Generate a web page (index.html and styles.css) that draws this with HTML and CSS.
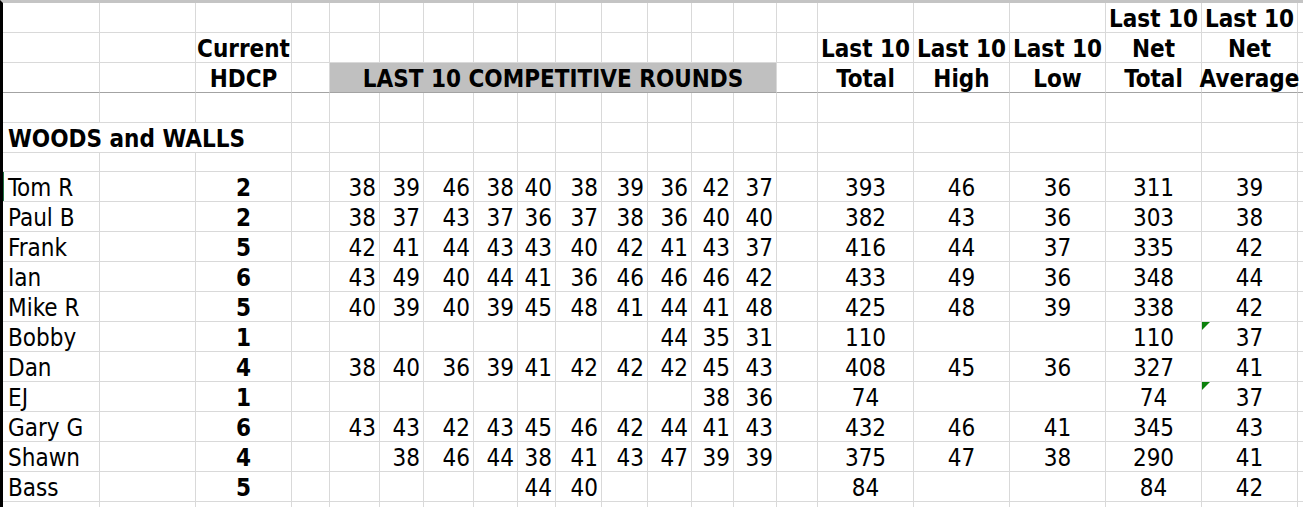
FILE: index.html
```html
<!DOCTYPE html>
<html>
<head>
<meta charset="utf-8">
<link rel="stylesheet" href="styles.css">
</head>
<body>
<div class="sheet">
  <div class="row">
    <div class="c"></div><div class="c"></div><div class="c"></div><div class="c"></div><div class="c"></div><div class="c"></div><div class="c"></div><div class="c"></div><div class="c"></div><div class="c"></div><div class="c"></div><div class="c"></div><div class="c"></div><div class="c"></div><div class="c"></div>
    <div class="c"></div><div class="c"></div><div class="c"></div><div class="c h">Last 10</div><div class="c h">Last 10</div><div class="c"></div>
  </div>
  <div class="row">
    <div class="c"></div><div class="c"></div><div class="c h">Current</div><div class="c"></div><div class="c"></div><div class="c"></div><div class="c"></div><div class="c"></div><div class="c"></div><div class="c"></div><div class="c"></div><div class="c"></div><div class="c"></div><div class="c"></div><div class="c"></div>
    <div class="c h">Last 10</div><div class="c h">Last 10</div><div class="c h">Last 10</div><div class="c h">Net</div><div class="c h">Net</div><div class="c"></div>
  </div>
  <div class="row head-end">
    <div class="c"></div><div class="c"></div><div class="c h">HDCP</div><div class="c"></div>
    <div class="c h band">LAST 10 COMPETITIVE ROUNDS</div>
    <div class="c"></div>
    <div class="c h">Total</div><div class="c h">High</div><div class="c h">Low</div><div class="c h">Total</div><div class="c h">Average</div><div class="c"></div>
  </div>
  <div class="row">
    <div class="c"></div><div class="c"></div><div class="c"></div><div class="c"></div><div class="c"></div><div class="c"></div><div class="c"></div><div class="c"></div><div class="c"></div><div class="c"></div><div class="c"></div><div class="c"></div><div class="c"></div><div class="c"></div><div class="c"></div>
    <div class="c"></div><div class="c"></div><div class="c"></div><div class="c"></div><div class="c"></div><div class="c"></div>
  </div>
  <div class="row">
    <div class="c group">WOODS and WALLS</div><div class="c"></div><div class="c"></div><div class="c"></div><div class="c"></div><div class="c"></div><div class="c"></div><div class="c"></div><div class="c"></div><div class="c"></div><div class="c"></div><div class="c"></div><div class="c"></div>
    <div class="c"></div><div class="c"></div><div class="c"></div><div class="c"></div><div class="c"></div><div class="c"></div>
  </div>
  <div class="row short">
    <div class="c"></div><div class="c"></div><div class="c"></div><div class="c"></div><div class="c"></div><div class="c"></div><div class="c"></div><div class="c"></div><div class="c"></div><div class="c"></div><div class="c"></div><div class="c"></div><div class="c"></div><div class="c"></div><div class="c"></div>
    <div class="c"></div><div class="c"></div><div class="c"></div><div class="c"></div><div class="c"></div><div class="c"></div>
  </div>

  <div class="row">
    <div class="c name sel">Tom R</div><div class="c"></div><div class="c hd">2</div><div class="c"></div>
    <div class="c n">38</div><div class="c n">39</div><div class="c n">46</div><div class="c n">38</div><div class="c n">40</div><div class="c n">38</div><div class="c n">39</div><div class="c n">36</div><div class="c n">42</div><div class="c n">37</div>
    <div class="c"></div><div class="c t">393</div><div class="c t">46</div><div class="c t">36</div><div class="c t">311</div><div class="c t">39</div><div class="c"></div>
  </div>
  <div class="row">
    <div class="c name">Paul B</div><div class="c"></div><div class="c hd">2</div><div class="c"></div>
    <div class="c n">38</div><div class="c n">37</div><div class="c n">43</div><div class="c n">37</div><div class="c n">36</div><div class="c n">37</div><div class="c n">38</div><div class="c n">36</div><div class="c n">40</div><div class="c n">40</div>
    <div class="c"></div><div class="c t">382</div><div class="c t">43</div><div class="c t">36</div><div class="c t">303</div><div class="c t">38</div><div class="c"></div>
  </div>
  <div class="row">
    <div class="c name">Frank</div><div class="c"></div><div class="c hd">5</div><div class="c"></div>
    <div class="c n">42</div><div class="c n">41</div><div class="c n">44</div><div class="c n">43</div><div class="c n">43</div><div class="c n">40</div><div class="c n">42</div><div class="c n">41</div><div class="c n">43</div><div class="c n">37</div>
    <div class="c"></div><div class="c t">416</div><div class="c t">44</div><div class="c t">37</div><div class="c t">335</div><div class="c t">42</div><div class="c"></div>
  </div>
  <div class="row">
    <div class="c name">Ian</div><div class="c"></div><div class="c hd">6</div><div class="c"></div>
    <div class="c n">43</div><div class="c n">49</div><div class="c n">40</div><div class="c n">44</div><div class="c n">41</div><div class="c n">36</div><div class="c n">46</div><div class="c n">46</div><div class="c n">46</div><div class="c n">42</div>
    <div class="c"></div><div class="c t">433</div><div class="c t">49</div><div class="c t">36</div><div class="c t">348</div><div class="c t">44</div><div class="c"></div>
  </div>
  <div class="row">
    <div class="c name">Mike R</div><div class="c"></div><div class="c hd">5</div><div class="c"></div>
    <div class="c n">40</div><div class="c n">39</div><div class="c n">40</div><div class="c n">39</div><div class="c n">45</div><div class="c n">48</div><div class="c n">41</div><div class="c n">44</div><div class="c n">41</div><div class="c n">48</div>
    <div class="c"></div><div class="c t">425</div><div class="c t">48</div><div class="c t">39</div><div class="c t">338</div><div class="c t">42</div><div class="c"></div>
  </div>
  <div class="row">
    <div class="c name">Bobby</div><div class="c"></div><div class="c hd">1</div><div class="c"></div>
    <div class="c n"></div><div class="c n"></div><div class="c n"></div><div class="c n"></div><div class="c n"></div><div class="c n"></div><div class="c n"></div><div class="c n">44</div><div class="c n">35</div><div class="c n">31</div>
    <div class="c"></div><div class="c t">110</div><div class="c t"></div><div class="c t"></div><div class="c t">110</div><div class="c t note">37</div><div class="c"></div>
  </div>
  <div class="row">
    <div class="c name">Dan</div><div class="c"></div><div class="c hd">4</div><div class="c"></div>
    <div class="c n">38</div><div class="c n">40</div><div class="c n">36</div><div class="c n">39</div><div class="c n">41</div><div class="c n">42</div><div class="c n">42</div><div class="c n">42</div><div class="c n">45</div><div class="c n">43</div>
    <div class="c"></div><div class="c t">408</div><div class="c t">45</div><div class="c t">36</div><div class="c t">327</div><div class="c t">41</div><div class="c"></div>
  </div>
  <div class="row">
    <div class="c name">EJ</div><div class="c"></div><div class="c hd">1</div><div class="c"></div>
    <div class="c n"></div><div class="c n"></div><div class="c n"></div><div class="c n"></div><div class="c n"></div><div class="c n"></div><div class="c n"></div><div class="c n"></div><div class="c n">38</div><div class="c n">36</div>
    <div class="c"></div><div class="c t">74</div><div class="c t"></div><div class="c t"></div><div class="c t">74</div><div class="c t note">37</div><div class="c"></div>
  </div>
  <div class="row">
    <div class="c name">Gary G</div><div class="c"></div><div class="c hd">6</div><div class="c"></div>
    <div class="c n">43</div><div class="c n">43</div><div class="c n">42</div><div class="c n">43</div><div class="c n">45</div><div class="c n">46</div><div class="c n">42</div><div class="c n">44</div><div class="c n">41</div><div class="c n">43</div>
    <div class="c"></div><div class="c t">432</div><div class="c t">46</div><div class="c t">41</div><div class="c t">345</div><div class="c t">43</div><div class="c"></div>
  </div>
  <div class="row">
    <div class="c name">Shawn</div><div class="c"></div><div class="c hd">4</div><div class="c"></div>
    <div class="c n"></div><div class="c n">38</div><div class="c n">46</div><div class="c n">44</div><div class="c n">38</div><div class="c n">41</div><div class="c n">43</div><div class="c n">47</div><div class="c n">39</div><div class="c n">39</div>
    <div class="c"></div><div class="c t">375</div><div class="c t">47</div><div class="c t">38</div><div class="c t">290</div><div class="c t">41</div><div class="c"></div>
  </div>
  <div class="row">
    <div class="c name">Bass</div><div class="c"></div><div class="c hd">5</div><div class="c"></div>
    <div class="c n"></div><div class="c n"></div><div class="c n"></div><div class="c n"></div><div class="c n">44</div><div class="c n">40</div><div class="c n"></div><div class="c n"></div><div class="c n"></div><div class="c n"></div>
    <div class="c"></div><div class="c t">84</div><div class="c t"></div><div class="c t"></div><div class="c t">84</div><div class="c t">42</div><div class="c"></div>
  </div>
  <div class="row">
    <div class="c"></div><div class="c"></div><div class="c"></div><div class="c"></div><div class="c"></div><div class="c"></div><div class="c"></div><div class="c"></div><div class="c"></div><div class="c"></div><div class="c"></div><div class="c"></div><div class="c"></div><div class="c"></div><div class="c"></div>
    <div class="c"></div><div class="c"></div><div class="c"></div><div class="c"></div><div class="c"></div><div class="c"></div>
  </div>
</div>
</body>
</html>
```

FILE: styles.css
```css
html, body {
  margin: 0;
  padding: 0;
  background: #ffffff;
  overflow: hidden;
}

body {
  font-family: "DejaVu Sans Condensed", "DejaVu Sans", sans-serif;
  font-size: 24px;
  color: #000000;
}

.sheet {
  height: 507px;
  border-left: 3px solid #000000;
  border-top: 3px solid #c4c4c4;
  box-sizing: border-box;
  overflow: hidden;
}

.row {
  display: grid;
  grid-template-columns: 97px 96px 96px 38px 50px 44px 50px 44px 38px 46px 46px 44px 42px 43px 41px 96px 96px 96px 96px 96px 1fr;
  height: 30px;
}

.row.short {
  height: 19px;
}

.c {
  position: relative;
  box-sizing: border-box;
  min-width: 0;
  display: flex;
  align-items: flex-end;
  justify-content: center;
  padding: 0 3px 1px 3px;
  line-height: 24px;
  white-space: nowrap;
  border-right: 1px solid #d9d9d9;
  border-bottom: 1px solid #d9d9d9;
}

.head-end .c {
  border-bottom-color: #a3a3a3;
}

.h {
  font-weight: bold;
}

.band {
  grid-column: span 10;
  background: #c0c0c0;
}

.group {
  grid-column: span 3;
  justify-content: flex-start;
  padding-left: 5px;
  font-weight: bold;
}

.name {
  justify-content: flex-start;
  padding-left: 5px;
}

.sel {
  box-shadow: inset 1px 0 0 #217346;
}

.hd {
  font-weight: bold;
}

.n {
  justify-content: flex-end;
  padding-right: 3px;
}

.t {
  justify-content: center;
}

.note::before {
  content: "";
  position: absolute;
  left: 0;
  top: 0;
  border-top: 8px solid #0b800b;
  border-right: 8px solid transparent;
}
```
